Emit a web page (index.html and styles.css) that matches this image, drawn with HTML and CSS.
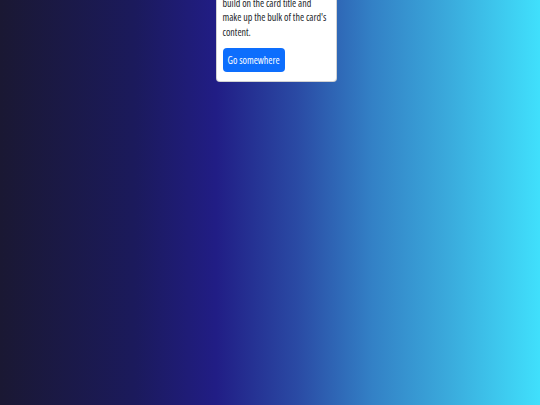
FILE: index.html
```html
<!DOCTYPE html>
<html>
<head>
<meta charset="utf-8">
<link rel="stylesheet" href="styles.css">
</head>
<body>
<div class="page">
  <div class="card">
    <div class="card-body">
      <p class="card-text">build on the card title and make up the bulk of the card's content.</p>
      <a class="btn" href="#">Go somewhere</a>
    </div>
  </div>
</div>
</body>
</html>
```
FILE: styles.css
```css
html, body {
  margin: 0;
  padding: 0;
  height: 100%;
}
body {
  font-family: "Open Sans", sans-serif;
  font-stretch: 75%;
  color: #212529;
  background: linear-gradient(90deg, #1a1833 0%, #1b1a5c 25%, #211d85 40%, #2a4aa4 55%, #3381c6 69%, #3aaadc 83%, #40e0fc 100%);
  overflow: hidden;
}
.page {
  height: 405px;
  display: flex;
  justify-content: center;
  align-items: flex-start;
}
.card {
  width: 121px;
  box-sizing: border-box;
  margin-top: -7px;
  margin-left: 12px;
  background: #fff;
  border: 1px solid rgba(0,0,0,0.175);
  border-radius: 4px;
}
.card-body {
  padding: 2px 6px 9px 6px;
}
.card-text {
  margin: 0 0 8px;
  font-size: 10px;
  line-height: 14.3px;
}
.btn {
  display: inline-block;
  background: #0d6efd;
  color: #fff;
  text-decoration: none;
  font-size: 10px;
  line-height: 15px;
  padding: 4.5px 5px;
  border-radius: 4px;
}
```
